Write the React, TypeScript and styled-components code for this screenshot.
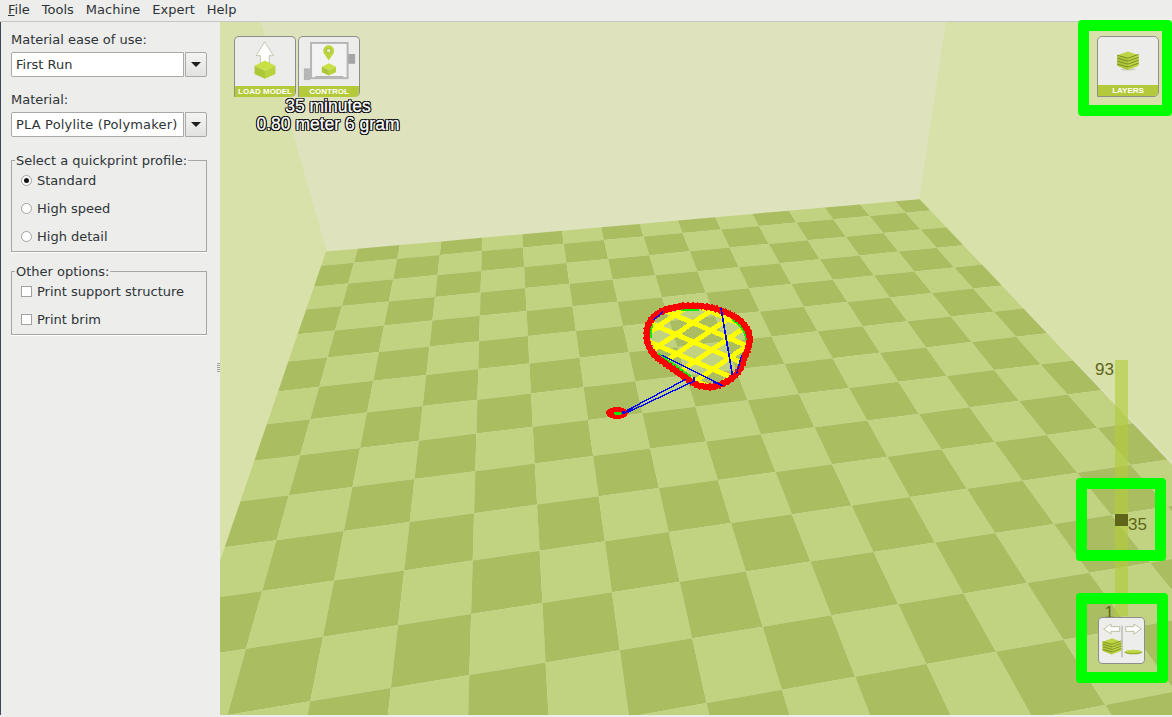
import React from 'react'
import styled, { createGlobalStyle } from 'styled-components'

const GlobalStyle = createGlobalStyle`
  html, body {
    margin: 0;
    padding: 0;
    height: 100%;
    overflow: hidden;
    background: #ededec;
  }
  body {
    font-family: 'DejaVu Sans', sans-serif;
    font-size: 13px;
    color: #2e3436;
  }
`

type Pt = [number, number]

// bed grid: u runs along the back edge, v runs towards the camera
const corners: Pt[] = [
  [354, 262.7],
  [833.3, 219.3],
  [1054, 524],
  [246, 648.7],
]
const GRID_U = 12
const GRID_V = 11

const makeProject = () => {
  const [[x0, y0], [x1, y1], [x2, y2], [x3, y3]] = corners
  const dx1 = x1 - x2
  const dx2 = x3 - x2
  const sx = x0 - x1 + x2 - x3
  const dy1 = y1 - y2
  const dy2 = y3 - y2
  const sy = y0 - y1 + y2 - y3
  const det = dx1 * dy2 - dx2 * dy1
  const g = (sx * dy2 - dx2 * sy) / det
  const h = (dx1 * sy - sx * dy1) / det
  const a = x1 - x0 + g * x1
  const b = x3 - x0 + h * x3
  const d = y1 - y0 + g * y1
  const e = y3 - y0 + h * y3
  return (u: number, v: number): Pt => {
    const s = u / GRID_U
    const t = v / GRID_V
    const w = g * s + h * t + 1
    return [(a * s + b * t + x0) / w, (d * s + e * t + y0) / w]
  }
}

const project = makeProject()
const U_MIN = -0.75
const U_MAX = 14.7
const V_MIN = -0.72
const V_MAX = 14.7

const floorCells = () => {
  const cells: { key: string; points: string; dark: boolean }[] = []
  for (let i = -1; i < 15; i++) {
    for (let j = -1; j < 15; j++) {
      const u0 = Math.max(i, U_MIN)
      const u1 = Math.min(i + 1, U_MAX)
      const v0 = Math.max(j, V_MIN)
      const v1 = Math.min(j + 1, V_MAX)
      const pts = [project(u0, v0), project(u1, v0), project(u1, v1), project(u0, v1)]
      cells.push({
        key: `${i}-${j}`,
        points: pts.map((p) => p.map((n) => n.toFixed(1)).join(',')).join(' '),
        dark: ((i + j) % 2 + 2) % 2 === 1,
      })
    }
  }
  return cells
}

const smoothPath = (pts: Pt[]) => {
  const mid = (a: Pt, b: Pt): Pt => [(a[0] + b[0]) / 2, (a[1] + b[1]) / 2]
  const start = mid(pts[pts.length - 1], pts[0])
  let d = `M${start[0]} ${start[1]}`
  pts.forEach((p, i) => {
    const m = mid(p, pts[(i + 1) % pts.length])
    d += ` Q${p[0]} ${p[1]} ${m[0]} ${m[1]}`
  })
  return d + ' Z'
}

// print outline, in 3x units of the little area around the model
const outline: Pt[] = [
  [290, 30], [350, 37], [395, 52], [432, 72], [457, 100], [466, 125], [460, 160], [447, 192],
  [437, 222], [415, 248], [382, 268], [350, 277], [312, 274], [285, 258], [250, 233], [215, 208],
  [178, 183], [158, 150], [153, 112], [162, 80], [190, 52], [235, 36],
]
const outlinePath = smoothPath(outline)

// two families of parallel infill lines through a common crossing
const infillLine = (slope: number, offset: number) => ({
  x1: 100,
  y1: 60 + offset + slope * (100 - 240),
  x2: 520,
  y2: 60 + offset + slope * (520 - 240),
})
const infillLines = [
  ...[-1, 0, 1, 2, 3, 4].map((k) => infillLine(0.43, k * 57)),
  ...[-1, 0, 1, 2, 3, 4, 5, 6].map((k) => infillLine(-0.68, k * 60)),
]

const blueLines: [number, number, number, number, number][] = [
  [378, 38, 412, 240, 5],
  [200, 180, 380, 270, 4],
  [272, 253, 85, 352, 4],
  [298, 258, 85, 358, 4],
  [440, 180, 425, 236, 4],
  [205, 50, 175, 75, 4],
  [298, 245, 298, 258, 5],
  [355, 262, 384, 272, 4],
]

const Scene = () => (
  <SceneSvg viewBox="220 22 952 693">
    <rect x="220" y="22" width="952" height="693" fill="#dee2bd" />
    <polygon points="220,22 261,22 326.7,251 220,600" fill="#d8e1aa" />
    <polygon points="946,22 1172,22 1172,461 919,200" fill="#d8e1aa" />
    {floorCells().map((c) => (
      <polygon key={c.key} points={c.points} fill={c.dark ? '#aabd61' : '#c1d380'} />
    ))}
    <g transform="translate(595 295) scale(0.3333)" shapeRendering="crispEdges">
      <defs>
        <clipPath id="model-clip">
          <path d={outlinePath} />
        </clipPath>
      </defs>
      <g clipPath="url(#model-clip)">
        {infillLines.map((l, i) => (
          <line key={i} {...l} stroke="#ffff00" strokeWidth={15} />
        ))}
        <path d="M215 205 L285 262 L360 280 L420 250" fill="none" stroke="#ffff00" strokeWidth={16} />
        <path
          d={outlinePath}
          fill="none"
          stroke="#00f000"
          strokeWidth={30}
          strokeDasharray="50 110 90 270 120 60"
        />
      </g>
      <path d={outlinePath} fill="none" stroke="#ff0000" strokeWidth={18} strokeLinejoin="round" />
      <path d={outlinePath} fill="none" stroke="#ff0000" strokeWidth={22} strokeDasharray="5 9" />
      {blueLines.map(([x1, y1, x2, y2, w], i) => (
        <line key={i} x1={x1} y1={y1} x2={x2} y2={y2} stroke="#0000ff" strokeWidth={w} />
      ))}
      <ellipse cx="66" cy="354" rx="33" ry="18" fill="#ff0000" />
      <ellipse cx="68" cy="355" rx="12" ry="5" fill="#00f000" />
      <line x1="85" y1="356" x2="115" y2="340" stroke="#0000ff" strokeWidth={5} />
      <rect x="82" y="349" width="8" height="9" fill="#0000ff" />
    </g>
  </SceneSvg>
)

const Cube = ({ x, y, s = 1 }: { x: number; y: number; s?: number }) => (
  <g transform={`translate(${x} ${y}) scale(${s})`}>
    <polygon points="0,16 32,0 64,16 32,31" fill="#c9e146" />
    <polygon points="0,16 32,31 32,56 0,41" fill="#acc737" />
    <polygon points="32,31 64,16 64,41 32,56" fill="#b9d33c" />
  </g>
)

const LoadIcon = () => (
  <IconSvg viewBox="0 0 184 150">
    <polygon
      points="91,15 65,57 78,57 78,80 105,80 105,57 118,57"
      fill="#ffffff"
      stroke="#a9ad8b"
      strokeWidth={2}
    />
    <Cube x={60} y={72} />
  </IconSvg>
)

const ControlIcon = () => (
  <IconSvg viewBox="0 0 184 150">
    <rect x="15" y="96" width="20" height="36" fill="#b5b5b5" />
    <rect x="150" y="52" width="22" height="30" fill="#a5a5a5" />
    <rect x="37" y="18" width="112" height="108" fill="#f3f3f3" stroke="#b5b5b5" strokeWidth={6} />
    <path d="M91 72 L75 48 A17 17 0 1 1 107 48 Z" fill="#bcd53c" />
    <circle cx="91" cy="42" r="7" fill="#e8efb6" stroke="#8ea32e" strokeWidth={2} />
    <Cube x={70} y={80} s={0.68} />
    <rect x="50" y="120" width="86" height="3" fill="#a5a5a5" />
  </IconSvg>
)

const LayerStack = () => (
  <g>
    <polygon points="0,12 33,0 66,12 66,44 33,57 0,44" fill="#bdd443" />
    <polygon points="0,12 33,22 33,57 0,44" fill="#afc73a" />
    {[12, 21, 30, 39].map((y) => (
      <polyline key={y} points={`0,${y} 33,${y + 9} 66,${y - 3}`} fill="none" stroke="#6f8020" strokeWidth={2.5} />
    ))}
  </g>
)

const LayersIcon = () => (
  <IconSvg viewBox="0 0 184 145">
    <ellipse cx="92" cy="98" rx="24" ry="4" fill="#cfcfc4" />
    <g transform="translate(59 43)">
      <LayerStack />
    </g>
  </IconSvg>
)

const StepperIcon = () => (
  <IconSvg viewBox="0 0 135 135">
    <polygon points="14,33 36,18 36,26 62,26 62,40 36,40 36,48" fill="#fff" stroke="#a4a977" strokeWidth={2} />
    <polygon points="127,33 105,18 105,26 80,26 80,40 105,40 105,48" fill="#fff" stroke="#a4a977" strokeWidth={2} />
    <rect x="68" y="23" width="2" height="95" fill="#7c7f70" />
    <g transform="translate(11 61) scale(0.85)">
      <LayerStack />
    </g>
    <ellipse cx="103" cy="103" rx="27" ry="6" fill="#98ae2f" />
    <ellipse cx="103" cy="100" rx="24" ry="5" fill="#c2d846" />
  </IconSvg>
)

const menuItems = ['Tools', 'Machine', 'Expert', 'Help']

const App = () => (
  <Page>
    <GlobalStyle />
    <MenuBar>
      <MenuItem>
        <u>F</u>ile
      </MenuItem>
      {menuItems.map((m) => (
        <MenuItem key={m}>{m}</MenuItem>
      ))}
    </MenuBar>
    <Main>
      <Sidebar>
        <FieldLabel>Material ease of use:</FieldLabel>
        <Combo>
          <ComboText>First Run</ComboText>
          <ComboButton />
        </Combo>
        <FieldLabel $gap>Material:</FieldLabel>
        <Combo>
          <ComboText $spread>PLA Polylite (Polymaker)</ComboText>
          <ComboButton />
        </Combo>
        <Group $top={15}>
          <Legend>Select a quickprint profile:</Legend>
          <Option>
            <Radio $checked />
            Standard
          </Option>
          <Option>
            <Radio />
            High speed
          </Option>
          <Option>
            <Radio />
            High detail
          </Option>
        </Group>
        <Group $top={11}>
          <Legend>Other options:</Legend>
          <Option>
            <Check />
            Print support structure
          </Option>
          <Option>
            <Check />
            Print brim
          </Option>
        </Group>
        <Grip />
      </Sidebar>
      <Viewport>
        <Scene />
        <ToolButtons>
          <ToolButton>
            <LoadIcon />
            <ToolBand>LOAD MODEL</ToolBand>
          </ToolButton>
          <ToolButton>
            <ControlIcon />
            <ToolBand>CONTROL</ToolBand>
          </ToolButton>
        </ToolButtons>
        <PrintInfo>
          35 minutes
          <br />
          0.80 meter 6 gram
        </PrintInfo>
        <LayersButton>
          <LayersIcon />
          <ToolBand>LAYERS</ToolBand>
        </LayersButton>
        <LayerSlider>
          <SliderLabel $side="left" $top={0}>93</SliderLabel>
          <SliderHandle />
          <SliderLabel $side="right" $top={155}>35</SliderLabel>
          <SliderLabel $side="left" $top={243}>1</SliderLabel>
        </LayerSlider>
        <Stepper>
          <StepperIcon />
        </Stepper>
      </Viewport>
    </Main>
    <Highlight $x={1078} $y={20} $w={94} $h={96} $right={10} />
    <Highlight $x={1076} $y={478} $w={90} $h={83} $right={11} />
    <Highlight $x={1076} $y={593} $w={92} $h={90} $right={11} />
  </Page>
)

const Page = styled.div`
  position: relative;
  display: flex;
  flex-direction: column;
  width: 1172px;
  height: 717px;
  overflow: hidden;
  background: #ededec;
`

const MenuBar = styled.div`
  display: flex;
  align-items: center;
  gap: 12px;
  box-sizing: border-box;
  height: 22px;
  padding: 0 0 1px 8px;
  background: #ededec;
  border-bottom: 1px solid #c6c6c4;
`

const MenuItem = styled.span`
  color: #2e3436;
  line-height: 20px;
`

const Main = styled.div`
  display: flex;
  height: 693px;
`

const Sidebar = styled.div`
  position: relative;
  display: flex;
  flex-direction: column;
  box-sizing: border-box;
  width: 220px;
  padding: 9px 13px 0 10px;
  border-left: 1px solid #3b4859;
`

const FieldLabel = styled.label<{ $gap?: boolean }>`
  height: 17px;
  line-height: 17px;
  margin-top: ${(p) => (p.$gap ? '14px' : '0')};
  margin-bottom: 4px;
`

const Combo = styled.div`
  display: flex;
  gap: 1px;
  height: 25px;
`

const ComboText = styled.div<{ $spread?: boolean }>`
  flex: 1;
  min-width: 0;
  padding-left: 4px;
  line-height: 23px;
  letter-spacing: ${(p) => (p.$spread ? '0.17px' : '0')};
  white-space: nowrap;
  background: #ffffff;
  border: 1px solid #a9a9a6;
  border-radius: 2px 0 0 2px;
`

const ComboButton = styled.div`
  position: relative;
  box-sizing: border-box;
  width: 22px;
  background: linear-gradient(#f4f4f3, #e2e2e0);
  border: 1px solid #a9a9a6;
  border-radius: 0 2px 2px 0;
  &::after {
    content: '';
    position: absolute;
    left: 5px;
    top: 9px;
    border-left: 5px solid transparent;
    border-right: 5px solid transparent;
    border-top: 5px solid #1f1f1f;
  }
`

const Group = styled.fieldset<{ $top: number }>`
  margin: ${(p) => p.$top}px 0 0;
  padding: 0 0 1px 9px;
  min-width: 0;
  border: 1px solid #a6a6a3;
  box-shadow: 0 1px 0 #ffffff;
`

const Legend = styled.legend`
  padding: 0 1px;
  margin-left: -6px;
  margin-bottom: -2px;
  line-height: 17px;
`

const Option = styled.div`
  display: flex;
  align-items: center;
  gap: 5px;
  height: 28px;
  margin-top: -1px;
  &:not(:last-child) {
    margin-bottom: 1px;
  }
`

const Radio = styled.span<{ $checked?: boolean }>`
  position: relative;
  box-sizing: border-box;
  width: 11px;
  height: 11px;
  background: #ffffff;
  border: 1px solid #a2a2a0;
  border-radius: 50%;
  &::after {
    content: '';
    display: ${(p) => (p.$checked ? 'block' : 'none')};
    position: absolute;
    left: 2px;
    top: 2px;
    width: 5px;
    height: 5px;
    background: #111111;
    border-radius: 50%;
  }
`

const Check = styled.span`
  box-sizing: border-box;
  width: 11px;
  height: 11px;
  background: #ffffff;
  border: 1px solid #a2a2a0;
`

const Grip = styled.div`
  position: absolute;
  right: 0;
  top: 341px;
  width: 3px;
  height: 9px;
  background: repeating-linear-gradient(#9f9f9d 0 1px, #ededec 1px 2px);
`

const Viewport = styled.div`
  position: relative;
  flex: 1;
  overflow: hidden;
`

const SceneSvg = styled.svg`
  display: block;
  width: 952px;
  height: 693px;
`

const ToolButtons = styled.div`
  position: absolute;
  left: 14px;
  top: 14px;
  display: flex;
  gap: 2px;
`

const ToolButton = styled.div`
  display: flex;
  flex-direction: column;
  box-sizing: border-box;
  width: 62px;
  height: 61px;
  overflow: hidden;
  background: #ececeb;
  border: 1px solid #8f8f8a;
  border-bottom: 0;
  border-radius: 5px 5px 5px 0;
`

const LayersButton = styled(ToolButton)`
  position: absolute;
  left: 877px;
  top: 14px;
  border-bottom: 1px solid #8f8f8a;
`

const IconSvg = styled.svg`
  display: block;
  flex: 1;
  min-height: 0;
  width: 100%;
`

const ToolBand = styled.div`
  flex: none;
  height: 11px;
  line-height: 11px;
  text-align: center;
  font-family: 'Liberation Sans', sans-serif;
  font-weight: 700;
  font-size: 8px;
  white-space: nowrap;
  color: #ffffff;
  background: #b4ca3b;
`

const PrintInfo = styled.div`
  position: absolute;
  left: 28px;
  top: 75px;
  width: 160px;
  text-align: center;
  font-family: 'Liberation Sans', sans-serif;
  font-size: 17.5px;
  line-height: 18px;
  color: #ffffff;
  -webkit-text-stroke: 0.3px #ffffff;
  text-shadow: 1px 0 0 #000, -1px 0 0 #000, 0 1px 0 #000, 0 -1px 0 #000, 1px 1px 0 #000,
    -1px -1px 0 #000, 1px -1px 0 #000, -1px 1px 0 #000;
`

const LayerSlider = styled.div`
  position: absolute;
  left: 895px;
  top: 338px;
  width: 13px;
  height: 256px;
  background: rgba(178, 204, 58, 0.62);
`

const SliderHandle = styled.div`
  position: absolute;
  left: 0;
  top: 154px;
  width: 13px;
  height: 12px;
  background: #5e6519;
`

const SliderLabel = styled.span<{ $side: 'left' | 'right'; $top: number }>`
  position: absolute;
  top: ${(p) => p.$top}px;
  ${(p) => (p.$side === 'left' ? 'right: 14px;' : 'left: 13px;')}
  font-family: 'Liberation Sans', sans-serif;
  font-size: 17px;
  line-height: 20px;
  color: #5e6519;
`

const Stepper = styled.div`
  position: absolute;
  left: 878px;
  top: 595px;
  display: flex;
  box-sizing: border-box;
  width: 47px;
  height: 47px;
  background: #ededec;
  border: 1px solid #8f8f8a;
  border-radius: 4px;
`

const Highlight = styled.div<{ $x: number; $y: number; $w: number; $h: number; $right: number }>`
  position: absolute;
  left: ${(p) => p.$x}px;
  top: ${(p) => p.$y}px;
  box-sizing: border-box;
  width: ${(p) => p.$w}px;
  height: ${(p) => p.$h}px;
  border: 11px solid #00ff00;
  border-right-width: ${(p) => p.$right}px;
  border-radius: 4px;
  pointer-events: none;
`

export default App
